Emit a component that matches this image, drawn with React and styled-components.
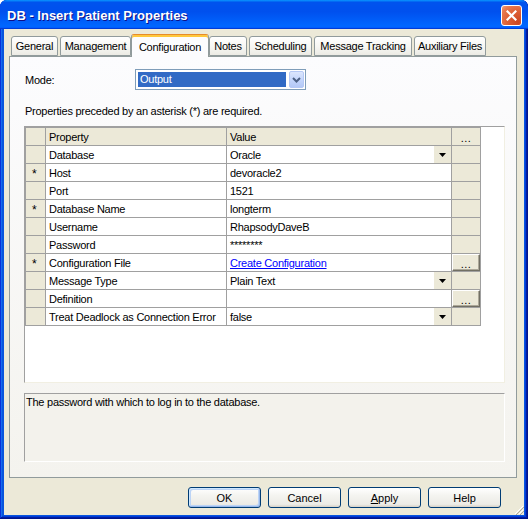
import React from 'react';
import styled, { createGlobalStyle } from 'styled-components';

const GlobalStyle = createGlobalStyle`
  html, body { margin: 0; padding: 0; background: #fff; }
  body {
    font-family: "Liberation Sans", Arial, sans-serif;
    font-size: 11px;
    letter-spacing: -0.25px;
    color: #000;
  }
`;

const Window = styled.div`
  position: relative;
  width: 528px;
  height: 519px;
  box-sizing: border-box;
  display: flex;
  flex-direction: column;
  background: #0855dd;
  border-radius: 7px 7px 0 0;
  overflow: hidden;
  box-shadow: inset -1px -1px #00138c, inset 1px 1px #0831d9,
    inset -2px -2px #001ea0, inset 2px 2px #166aee,
    inset -3px -3px #003bda, inset 3px 3px #0855dd;
`;

const TitleBar = styled.div`
  flex: none;
  height: 29px;
  display: flex;
  align-items: center;
  justify-content: space-between;
  padding: 0 6px 0 7px;
  background: linear-gradient(180deg, #0997ff, #0053ee 8%, #0050ee 40%, #0066ff 88%, #0066ff 93%, #005bff 95%, #003dd7 96%, #003dd7);
`;

const Title = styled.div`
  font-size: 13px;
  font-weight: bold;
  color: #fff;
  letter-spacing: 0;
  text-shadow: 1px 1px #0f1089;
  padding-top: 1px;
`;

const CloseButton = styled.div`
  width: 21px;
  height: 21px;
  box-sizing: border-box;
  border: 1px solid #fff;
  border-radius: 3px;
  background: radial-gradient(circle at 85% 85%, #cc4622 0%, #dc5e34 45%, #e87a50 80%, #f0a080 100%);
  display: flex;
  align-items: center;
  justify-content: center;
  margin-top: 1px;
`;

const Body = styled.div`
  flex: 1;
  margin: 0 4px 4px 4px;
  background: #ece9d8;
  display: flex;
  flex-direction: column;
  padding: 5px 7px 0 5px;
  position: relative;
`;

const TabStrip = styled.div`
  display: flex;
  align-items: flex-end;
  height: 22px;
  padding-left: 2px;
  position: relative;
  z-index: 1;
`;

const Tab = styled.div`
  width: ${(p) => p.w}px;
  box-sizing: border-box;
  height: ${(p) => (p.active ? 23 : 20)}px;
  margin: 0 ${(p) => (p.active ? 0 : 2)}px ${(p) => (p.active ? -1 : 0)}px ${(p) => (p.active ? -2 : 0)}px;
  border: 1px solid #919b9c;
  border-bottom: ${(p) => (p.active ? 'none' : '1px solid #919b9c')};
  border-top-color: ${(p) => (p.active ? '#e68b2c' : '#919b9c')};
  border-radius: 3px 3px 0 0;
  background: ${(p) =>
    p.active ? '#fcfcfe' : 'linear-gradient(180deg, #fff, #f7f7f3 50%, #ecebe5)'};
  box-shadow: ${(p) => (p.active ? 'inset 0 2px #ffc83c' : 'none')};
  display: flex;
  align-items: center;
  justify-content: center;
  padding-top: ${(p) => (p.active ? 1 : 0)}px;
  white-space: nowrap;
`;

const Panel = styled.div`
  height: 422px;
  box-sizing: border-box;
  border: 1px solid #919b9c;
  background: linear-gradient(180deg, #fcfcfe, #f4f3ee);
  display: flex;
  flex-direction: column;
  padding: 12px 11px 14px 14px;
`;

const ModeRow = styled.div`
  display: flex;
  align-items: center;
  height: 21px;
`;

const ModeLabel = styled.div`
  width: 110px;
  padding-left: 1px;
`;

const Combo = styled.div`
  width: 171px;
  height: 21px;
  box-sizing: border-box;
  border: 1px solid #7f9db9;
  background: #fff;
  display: flex;
  align-items: center;
  padding: 1px 1px 1px 2px;
  gap: 3px;
`;

const ComboValue = styled.div`
  flex: 1;
  height: 15px;
  background: #316ac5;
  color: #fff;
  line-height: 15px;
  padding-left: 2px;
`;

const ComboButton = styled.div`
  width: 15px;
  height: 17px;
  box-sizing: border-box;
  border: 1px solid #b5c8f5;
  border-radius: 2px;
  background: linear-gradient(180deg, #dce6fd, #c1d3fb 60%, #b4c8f6);
  display: flex;
  align-items: center;
  justify-content: center;
`;

const Hint = styled.div`
  margin-top: 15px;
  line-height: 13px;
  padding-left: 1px;
`;

const GridBox = styled.div`
  margin-top: 8px;
  height: 257px;
  box-sizing: border-box;
  border: 1px solid;
  border-color: #a0a0a0 #f1efe2 #f1efe2 #a0a0a0;
  background: #fff;
`;

const Table = styled.div`
  display: grid;
  grid-template-columns: 20px 181px 225px 29px;
  grid-auto-rows: 18px;
  width: max-content;
  border-top: 1px solid #a0a0a0;
  border-left: 1px solid #a0a0a0;
`;

const Cell = styled.div`
  box-sizing: border-box;
  border-right: 1px solid #a0a0a0;
  border-bottom: 1px solid #a0a0a0;
  background: ${(p) => (p.shaded ? '#ece9d8' : '#fff')};
  display: flex;
  align-items: center;
  justify-content: ${(p) => (p.center ? 'center' : 'flex-start')};
  padding-left: ${(p) => (p.center ? 0 : 2)}px;
  white-space: nowrap;
  overflow: hidden;
  position: relative;
`;

const Star = styled.span`
  padding-left: 4px;
  font-size: 12px;
  padding-top: 3px;
`;

const CellText = styled.span`
  flex: 1;
  padding-left: 1px;
`;

const Link = styled.span`
  flex: 1;
  padding-left: 1px;
  color: #0000ff;
  text-decoration: underline;
`;

const DropArrow = styled.div`
  width: 17px;
  align-self: stretch;
  background: #ece9d8;
  display: flex;
  align-items: center;
  justify-content: center;
`;

const EllipsisButton = styled.div`
  width: 100%;
  height: 100%;
  box-sizing: border-box;
  border: 1px solid;
  border-color: #fff #716f64 #716f64 #fff;
  box-shadow: inset -1px -1px #aca899;
  background: #ece9d8;
  display: flex;
  align-items: center;
  justify-content: center;
  padding-top: 2px;
  letter-spacing: 0.5px;
`;

const Dots = styled.span`
  letter-spacing: 0.5px;
  padding-top: 2px;
`;

const Description = styled.div`
  margin-top: 10px;
  height: 69px;
  box-sizing: border-box;
  border: 1px solid;
  border-color: #a0a0a0 #fff #fff #a0a0a0;
  background: #f3f2ec;
  padding: 2px 1px;
  line-height: 13px;
`;

const ButtonRow = styled.div`
  display: flex;
  justify-content: flex-end;
  gap: 7px;
  margin-top: 9px;
  padding-right: 16px;
`;

const Button = styled.div`
  width: 73px;
  height: 21px;
  box-sizing: border-box;
  border: 1px solid #003c74;
  border-radius: 3px;
  background: linear-gradient(180deg, #fff, #f4f4f0 40%, #ecebe6 86%, #d6d0c5);
  box-shadow: ${(p) =>
    p.primary ? 'inset -1px -1px #98b8ea, inset 1px 1px #cee7ff, inset -2px -2px #bcd4f6, inset 2px 2px #bcd4f6' : 'none'};
  display: flex;
  align-items: center;
  justify-content: center;
  letter-spacing: 0;
`;

const Grip = styled.svg`
  position: absolute;
  right: 0;
  bottom: 0;
`;

const tabs = [
  { label: 'General', w: 47 },
  { label: 'Management', w: 71 },
  { label: 'Configuration', w: 78, active: true },
  { label: 'Notes', w: 38 },
  { label: 'Scheduling', w: 63 },
  { label: 'Message Tracking', w: 98 },
  { label: 'Auxiliary Files', w: 72 },
];

const rows = [
  { name: 'Database', value: 'Oracle', combo: true },
  { name: 'Host', value: 'devoracle2', req: true },
  { name: 'Port', value: '1521' },
  { name: 'Database Name', value: 'longterm', req: true },
  { name: 'Username', value: 'RhapsodyDaveB' },
  { name: 'Password', value: '********' },
  { name: 'Configuration File', value: 'Create Configuration', req: true, link: true, button: true },
  { name: 'Message Type', value: 'Plain Text', combo: true },
  { name: 'Definition', value: '', button: true },
  { name: 'Treat Deadlock as Connection Error', value: 'false', combo: true },
];

const Triangle = () => (
  <svg width="7" height="4" viewBox="0 0 7 4">
    <path d="M0 0h7L3.5 4z" fill="#000" />
  </svg>
);

export default function App() {
  return (
    <>
      <GlobalStyle />
      <Window>
        <TitleBar>
          <Title>DB - Insert Patient Properties</Title>
          <CloseButton>
            <svg width="11" height="11" viewBox="0 0 11 11">
              <path d="M1.5 1.5l8 8M9.5 1.5l-8 8" stroke="#fff" strokeWidth="2.2" strokeLinecap="square" />
            </svg>
          </CloseButton>
        </TitleBar>
        <Body>
          <TabStrip>
            {tabs.map((t) => (
              <Tab key={t.label} w={t.w} active={t.active}>
                {t.label}
              </Tab>
            ))}
          </TabStrip>
          <Panel>
            <ModeRow>
              <ModeLabel>Mode:</ModeLabel>
              <Combo>
                <ComboValue>Output</ComboValue>
                <ComboButton>
                  <svg width="9" height="6" viewBox="0 0 9 6">
                    <path d="M1 1l3.5 3.5L8 1" stroke="#4d6185" strokeWidth="2" fill="none" />
                  </svg>
                </ComboButton>
              </Combo>
            </ModeRow>
            <Hint>Properties preceded by an asterisk (*) are required.</Hint>
            <GridBox>
              <Table>
                <Cell shaded />
                <Cell shaded>
                  <CellText>Property</CellText>
                </Cell>
                <Cell shaded>
                  <CellText>Value</CellText>
                </Cell>
                <Cell shaded center>
                  <Dots>...</Dots>
                </Cell>
                {rows.map((r) => (
                  <React.Fragment key={r.name}>
                    <Cell shaded>{r.req && <Star>*</Star>}</Cell>
                    <Cell>
                      <CellText>{r.name}</CellText>
                    </Cell>
                    <Cell>
                      {r.link ? <Link>{r.value}</Link> : <CellText>{r.value}</CellText>}
                      {r.combo && (
                        <DropArrow>
                          <Triangle />
                        </DropArrow>
                      )}
                    </Cell>
                    <Cell shaded center>
                      {r.button && <EllipsisButton>...</EllipsisButton>}
                    </Cell>
                  </React.Fragment>
                ))}
              </Table>
            </GridBox>
            <Description>The password with which to log in to the database.</Description>
          </Panel>
          <ButtonRow>
            <Button primary>OK</Button>
            <Button>Cancel</Button>
            <Button>
              <span>
                <u>A</u>pply
              </span>
            </Button>
            <Button>Help</Button>
          </ButtonRow>
          <Grip width="12" height="12" viewBox="0 0 12 12">
            <path d="M11 3L3 11M11 7L7 11M11 11L11 11" stroke="#fff" strokeWidth="1" />
            <path d="M12 4L4 12M12 8L8 12" stroke="#aca899" strokeWidth="1" />
          </Grip>
        </Body>
      </Window>
    </>
  );
}
